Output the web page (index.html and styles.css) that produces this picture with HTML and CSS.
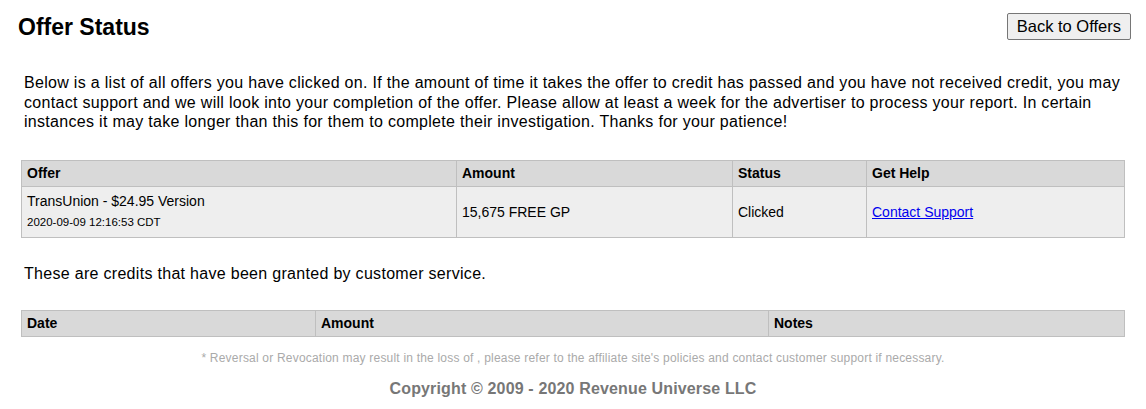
FILE: index.html
```html
<!DOCTYPE html>
<html>
<head>
<meta charset="utf-8">
<link rel="stylesheet" href="styles.css">
</head>
<body>
<div class="page">
  <div class="topbar">
    <h1 class="title">Offer Status</h1>
    <button class="back-btn">Back to Offers</button>
  </div>
  <p class="intro">Below is a list of all offers you have clicked on. If the amount of time it takes the offer to credit has passed and you have not received credit, you may contact support and we will look into your completion of the offer. Please allow at least a week for the advertiser to process your report. In certain instances it may take longer than this for them to complete their investigation. Thanks for your patience!</p>
  <table class="grid offers">
    <thead>
      <tr><th class="c-offer">Offer</th><th class="c-amount">Amount</th><th class="c-status">Status</th><th class="c-help">Get Help</th></tr>
    </thead>
    <tbody>
      <tr>
        <td><div class="offer-name">TransUnion - $24.95 Version</div><div class="offer-date">2020-09-09 12:16:53 CDT</div></td>
        <td>15,675 FREE GP</td>
        <td>Clicked</td>
        <td><a href="#" class="link">Contact Support</a></td>
      </tr>
    </tbody>
  </table>
  <p class="credits-text">These are credits that have been granted by customer service.</p>
  <table class="grid credits">
    <thead>
      <tr><th class="c-date">Date</th><th class="c-camount">Amount</th><th class="c-notes">Notes</th></tr>
    </thead>
  </table>
  <p class="footnote">* Reversal or Revocation may result in the loss of , please refer to the affiliate site's policies and contact customer support if necessary.</p>
  <p class="copyright">Copyright © 2009 - 2020 Revenue Universe LLC</p>
</div>
</body>
</html>
```
FILE: styles.css
```css
html, body {
  margin: 0;
  padding: 0;
  background: #ffffff;
}
body {
  font-family: "Liberation Sans", Arial, sans-serif;
  color: #000;
}
.page {
  padding: 0 18px 0 18px;
}
.topbar {
  display: flex;
  justify-content: space-between;
  align-items: flex-start;
  padding-top: 13px;
}
.title {
  margin: 1px 0 0 0;
  font-size: 23px;
  line-height: 26px;
  font-weight: bold;
}
.back-btn {
  font-family: "Liberation Sans", Arial, sans-serif;
  font-size: 16.5px;
  height: 27px;
  padding: 0 9px;
  background: #efefef;
  border: 1px solid #767676;
  border-radius: 2px;
  color: #000;
  margin-right: -3px;
}
.intro {
  margin: 33px 0 0 6px;
  font-size: 16px;
  line-height: 19.5px;
  letter-spacing: 0.3px;
  padding-right: 3px;
}
.grid {
  border-collapse: collapse;
  width: calc(100% - 6px);
  margin-left: 3px;
  font-size: 14px;
}
.grid th, .grid td {
  border: 1px solid #bfbfbf;
  text-align: left;
  padding: 0 5px;
}
.grid th {
  background: #d9d9d9;
  font-weight: bold;
  height: 25px;
}
.grid td {
  background: #eeeeee;
  height: 50px;
}
.offers {
  margin-top: 28px;
}
.c-offer { width: 424px; }
.c-amount { width: 265px; }
.c-status { width: 123px; }
.offer-name { line-height: 18px; margin-top: -2px; }
.offer-date { font-size: 11.5px; line-height: 16px; margin-top: 4px; }
.link { color: #0000ee; }
.credits-text {
  margin: 26px 0 0 6px;
  font-size: 16px;
  line-height: 19px;
  letter-spacing: 0.3px;
}
.credits {
  margin-top: 27px;
}
.c-date { width: 283px; }
.c-camount { width: 442px; }
.footnote {
  margin: 13px 0 0 0;
  text-align: center;
  color: #aaaaaa;
  font-size: 12px;
  line-height: 16px;
  letter-spacing: 0.2px;
}
.copyright {
  margin: 13px 0 0 0;
  text-align: center;
  color: #777777;
  font-size: 16px;
  font-weight: bold;
  line-height: 19px;
  letter-spacing: 0.15px;
}
```
